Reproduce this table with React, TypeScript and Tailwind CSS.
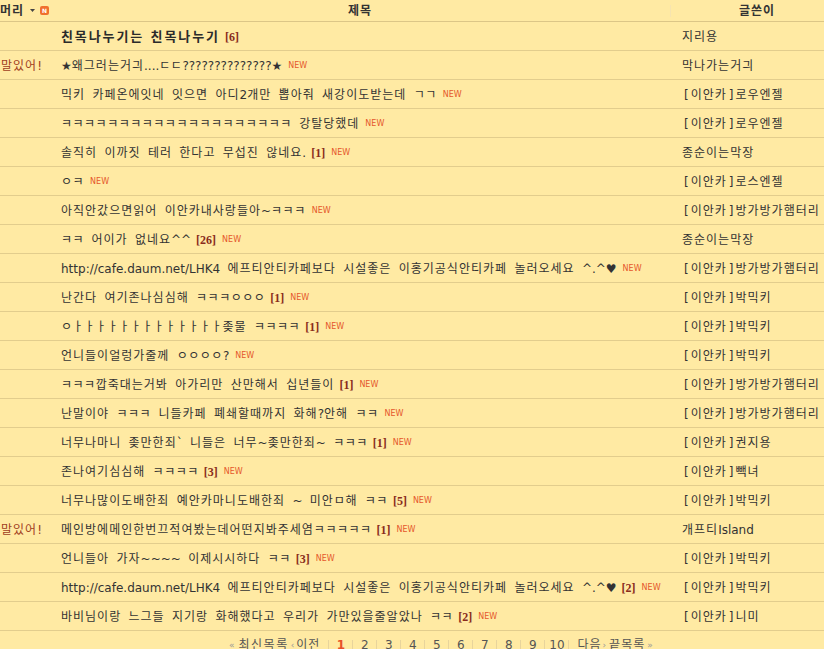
import React from "react";

type Row = {
  head?: string;
  title: string;
  bold?: boolean;
  count?: number;
  isNew?: boolean;
  writer: string;
};

const rows: Row[] = [
  { title: "친목나누기는 친목나누기", bold: true, count: 6, writer: "지리용" },
  { head: "할말있어!", title: "★왜그러는거긔....ㄷㄷ??????????????★", isNew: true, writer: "막나가는거긔" },
  { title: "믹키 카페온에잇네 잇으면 아디2개만 뽑아줘 새강이도받는데 ㄱㄱ", isNew: true, writer: "[이안카]로우엔젤" },
  { title: "ㅋㅋㅋㅋㅋㅋㅋㅋㅋㅋㅋㅋㅋㅋㅋㅋㅋㅋㅋㅋ 강탈당했데", isNew: true, writer: "[이안카]로우엔젤" },
  { title: "솔직히 이까짓 테러 한다고 무섭진 않네요.", count: 1, isNew: true, writer: "종순이는막장" },
  { title: "ㅇㅋ", isNew: true, writer: "[이안카]로스엔젤" },
  { title: "아직안갔으면읽어 이안카내사랑들아~ㅋㅋㅋ", isNew: true, writer: "[이안카]방가방가햄터리" },
  { title: "ㅋㅋ 어이가 없네요^^", count: 26, isNew: true, writer: "종순이는막장" },
  { title: "http://cafe.daum.net/LHK4 에프티안티카페보다 시설좋은 이홍기공식안티카페 놀러오세요 ^.^♥", isNew: true, writer: "[이안카]방가방가햄터리" },
  { title: "난간다 여기존나심심해 ㅋㅋㅋㅇㅇㅇ", count: 1, isNew: true, writer: "[이안카]박믹키" },
  { title: "ㅇㅏㅏㅏㅏㅏㅏㅏㅏㅏㅏㅏㅏㅏ좆물 ㅋㅋㅋㅋ", count: 1, isNew: true, writer: "[이안카]박믹키" },
  { title: "언니들이얼렁가줄께 ㅇㅇㅇㅇ?", isNew: true, writer: "[이안카]박믹키" },
  { title: "ㅋㅋㅋ깝죽대는거봐 아가리만 산만해서 십년들이", count: 1, isNew: true, writer: "[이안카]방가방가햄터리" },
  { title: "난말이야 ㅋㅋㅋ 니들카페 폐쇄할때까지 화해?안해 ㅋㅋ", isNew: true, writer: "[이안카]방가방가햄터리" },
  { title: "너무나마니 좆만한죄` 니들은 너무~좆만한죄~ ㅋㅋㅋ", count: 1, isNew: true, writer: "[이안카]권지용" },
  { title: "존나여기심심해 ㅋㅋㅋㅋ", count: 3, isNew: true, writer: "[이안카]빽녀" },
  { title: "너무나많이도배한죄 예안카마니도배한죄 ~ 미안ㅁ해 ㅋㅋ", count: 5, isNew: true, writer: "[이안카]박믹키" },
  { head: "할말있어!", title: "메인방에메인한번끄적여봤는데어떤지봐주세염ㅋㅋㅋㅋㅋ", count: 1, isNew: true, writer: "개프티Island" },
  { title: "언니들아 가자~~~~ 이제시시하다 ㅋㅋ", count: 3, isNew: true, writer: "[이안카]박믹키" },
  { title: "http://cafe.daum.net/LHK4 에프티안티카페보다 시설좋은 이홍기공식안티카페 놀러오세요 ^.^♥", count: 2, isNew: true, writer: "[이안카]박믹키" },
  { title: "바비님이랑 느그들 지기랑 화해했다고 우리가 가만있을줄알았나 ㅋㅋ", count: 2, isNew: true, writer: "[이안카]니미" },
];

const pages = ["1", "2", "3", "4", "5", "6", "7", "8", "9", "10"];

// hangul in Noto CJK KR is a bit narrower than the old gulim look, so pad it out
function Ko({ text }: { text: string }) {
  const parts = text.split(/([\uAC00-\uD7A3]+|[\u3131-\u318E]+|[\[\]])/);
  return (
    <>
      {parts.map((p, i) => {
        if (!p) return null;
        if (/[\uAC00-\uD7A3]/.test(p)) {
          return (
            <span key={i} className="tracking-[1px]">
              {p}
            </span>
          );
        }
        if (/[\u3131-\u318E]/.test(p)) {
          return (
            <span key={i} className="tracking-[0.5px]">
              {p}
            </span>
          );
        }
        if (p === "[" || p === "]") {
          return (
            <span key={i} className="px-[2px]">
              {p}
            </span>
          );
        }
        return <span key={i}>{p}</span>;
      })}
    </>
  );
}

function NewMark() {
  return (
    <span className="ml-[6px] text-[8px] leading-none text-[#e5582b] font-['DejaVu_Sans',sans-serif] [word-spacing:0]">
      NEW
    </span>
  );
}

function Count({ n }: { n: number }) {
  return (
    <span className="ml-[5px] text-[12px] font-bold text-[#8a2c1c] font-['Liberation_Serif',serif]">
      [{n}]
    </span>
  );
}

function Sep() {
  return <span className="w-px h-[11px] bg-[#e8d49c]" />;
}

export default function App() {
  return (
    <div className="w-[824px] h-[649px] overflow-hidden bg-[#ffeaa3] text-[#333] text-[12px] [word-spacing:3.5px] font-['DejaVu_Sans','Noto_Sans_CJK_KR',sans-serif]">
      <div className="-ml-[12px] w-[900px]">
        {/* header */}
        <div className="flex items-center h-[22px] border-b border-[#dcc687]">
          <div className="w-[62px] flex items-center font-bold">
            <span className="tracking-[1px]">말머리</span>
            <svg width="5" height="3" viewBox="0 0 5 3" className="ml-[6px]">
              <path d="M0 0 H5 L2.5 3 Z" fill="#444" />
            </svg>
            <span className="ml-[5px] w-[9px] h-[9px] rounded-[2px] bg-[#f0702e] text-white text-[6px] font-bold leading-[9px] text-center font-['DejaVu_Sans',sans-serif]">
              N
            </span>
          </div>
          <div className="w-[620px] text-center font-bold tracking-[1px]">제목</div>
          <span className="w-px h-[12px] bg-[#f6e4b0]" />
          <div className="w-[172px] text-center font-bold tracking-[1px]">글쓴이</div>
        </div>

        {rows.map((r, i) => (
          <div key={i} className="flex items-center h-[29px] pt-[2px] border-b border-[#e2cd8d] whitespace-nowrap">
            <div className="w-[73px] pl-[1px] text-[#a1401e]">{r.head && <Ko text={r.head} />}</div>
            <div className="w-[621px] flex items-center leading-[14px]">
              {r.bold ? (
                <span className="font-bold text-[13px] tracking-[1.9px] [word-spacing:0] text-[#2b2b2b]">{r.title}</span>
              ) : (
                <span>
                  <Ko text={r.title} />
                </span>
              )}
              {r.count !== undefined && <Count n={r.count} />}
              {r.isNew && <NewMark />}
            </div>
            <div className="flex-1 leading-[14px] overflow-hidden">
              <Ko text={r.writer} />
            </div>
          </div>
        ))}
      </div>

      {/* pagination */}
      <div className="flex items-center pl-[229px] pt-[7px] text-[#555] leading-[14px] [word-spacing:0]">
        <span className="text-[9px] text-[#999]">«</span>
        <span className="ml-[4px] tracking-[1.5px]">최신목록</span>
        <span className="ml-[2px] text-[9px] text-[#999]">‹</span>
        <span className="ml-[2px] mr-[8px] tracking-[1px]">이전</span>
        <Sep />
        {pages.map((p) => (
          <React.Fragment key={p}>
            <span className={`w-[23px] text-center ${p === "1" ? "text-[#e8502a] font-bold" : ""}`}>{p}</span>
            <Sep />
          </React.Fragment>
        ))}
        <span className="ml-[8px] tracking-[1px]">다음</span>
        <span className="ml-[1px] text-[9px] text-[#999]">›</span>
        <span className="ml-[3px] tracking-[1px]">끝목록</span>
        <span className="ml-[2px] text-[9px] text-[#999]">»</span>
      </div>
    </div>
  );
}
